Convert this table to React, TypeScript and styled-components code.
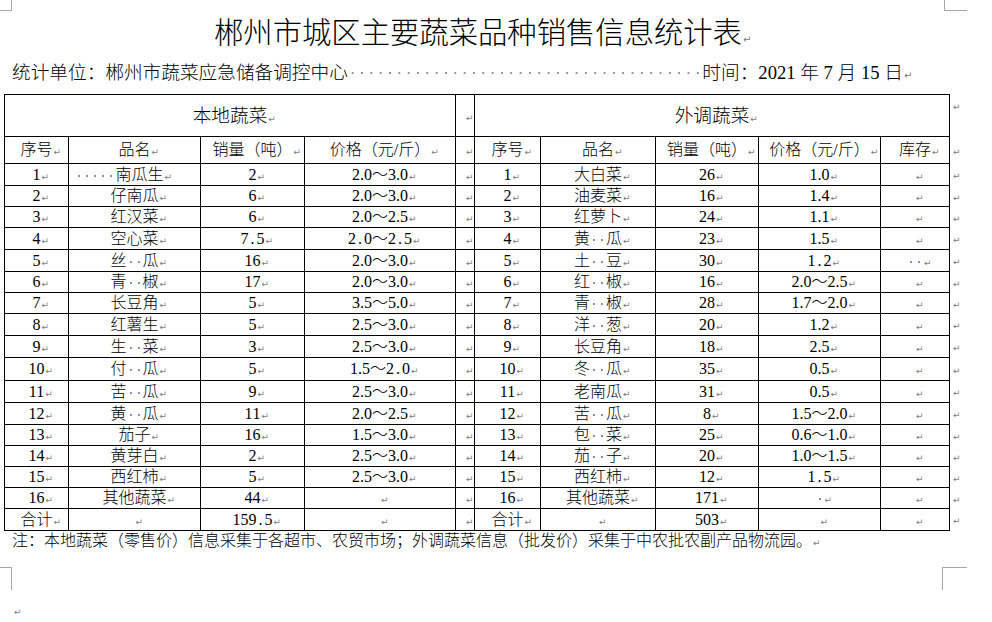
import React from "react";
import styled, { createGlobalStyle } from "styled-components";

const GlobalStyle = createGlobalStyle`
  html, body {
    margin: 0;
    padding: 0;
    background: #fff;
  }
  body {
    font-family: "Liberation Serif", "Noto Sans CJK SC", sans-serif;
    font-weight: 300;
    color: #000;
    overflow: hidden;
  }
`;

const Page = styled.div`
  width: 992px;
  height: 622px;
`;

const CropRow = styled.div<{ $h: number; $top?: number }>`
  display: flex;
  justify-content: space-between;
  height: ${(p) => p.$h}px;
  margin-top: ${(p) => p.$top ?? 0}px;
`;

const Crop = styled.div<{ $side: "left" | "right"; $edge: "top" | "bottom"; $w: number }>`
  box-sizing: border-box;
  width: ${(p) => p.$w}px;
  height: 100%;
  border: 0 solid #a6a6a6;
  ${(p) => (p.$side === "left" ? "border-right-width: 1px;" : "border-left-width: 1px; margin-right: 25px;")}
  ${(p) => (p.$edge === "top" ? "border-bottom-width: 1px;" : "border-top-width: 1px;")}
`;

const Title = styled.h1`
  margin: 0;
  padding: 0 48px 0 12px;
  font-size: 29.33px;
  font-weight: 300;
  line-height: 44px;
  text-align: center;
`;

const InfoLine = styled.div`
  display: flex;
  align-items: center;
  margin-top: 2px;
  padding-left: 12px;
  font-size: 18.67px;
  line-height: 32px;
  white-space: nowrap;
`;

const Mark = styled.span<{ $size?: number }>`
  display: inline-block;
  width: 0;
  white-space: nowrap;
  text-indent: 1px;
  font-family: "DejaVu Sans", sans-serif;
  font-weight: 400;
  font-size: ${(p) => p.$size ?? 9}px;
  line-height: 1;
  color: #7c7c7c;
`;

const Dots = styled.span<{ $n: number; $gap: number }>`
  display: inline-block;
  width: ${(p) => p.$n * p.$gap}px;
  height: 12px;
  vertical-align: middle;
  background-image: radial-gradient(circle, #8496ad 0 0.9px, transparent 1.3px);
  background-size: ${(p) => p.$gap}px 100%;
  background-repeat: repeat-x;
`;

/* half-width cell of the old Song-style digits: every ASCII glyph takes 8px */
const HalfChar = styled.span`
  display: inline-block;
  width: 8px;
  text-align: center;
`;

const Sheet = styled.table`
  border-collapse: collapse;
  table-layout: fixed;
  margin: 5px 0 0 4px;
`;

const Row = styled.tr<{ $h: number }>`
  height: ${(p) => p.$h}px;
`;

const Cell = styled.td<{ $size?: number; $pr?: number }>`
  border: 1px solid #000;
  padding: 0 ${(p) => p.$pr ?? 0}px 0 0;
  text-align: center;
  vertical-align: middle;
  font-size: ${(p) => p.$size ?? 16}px;
  line-height: 16px;
  white-space: nowrap;
`;

const EndCell = styled.td<{ $top?: boolean }>`
  border: none;
  padding: ${(p) => (p.$top ? "4px" : "0")} 0 0 2px;
  text-align: left;
  vertical-align: ${(p) => (p.$top ? "top" : "middle")};
  line-height: 12px;
`;

const Note = styled.p`
  margin: 0;
  padding-left: 12px;
  font-size: 16px;
  line-height: 20px;
  white-space: nowrap;
`;

const LastLine = styled.div`
  margin-top: 14px;
  padding-left: 13px;
  line-height: 12px;
`;

const colWidths = [64, 132, 104, 151, 19, 66, 115, 103, 122, 69, 30];

const leftRows: string[][] = [
  ["1", "·····南瓜生", "{2}", "2.0～3.0"],
  ["2", "仔南瓜", "{6}", "2.0～3.0"],
  ["3", "红汉菜", "{6}", "2.0～2.5"],
  ["4", "空心菜", "{7.5}", "{2.0～2.5}"],
  ["5", "丝··瓜", "{16}", "2.0～3.0"],
  ["6", "青··椒", "{17}", "2.0～3.0"],
  ["7", "长豆角", "{5}", "3.5～5.0"],
  ["8", "红薯生", "{5}", "2.5～3.0"],
  ["9", "生··菜", "{3}", "2.5～3.0"],
  ["10", "付··瓜", "{5}", "1.5～{2.0}"],
  ["11", "苦··瓜", "{9}", "2.5～3.0"],
  ["12", "黄··瓜", "{11}", "2.0～2.5"],
  ["13", "茄子", "{16}", "1.5～3.0"],
  ["14", "黄芽白", "2", "2.5～3.0"],
  ["15", "西红柿", "5", "2.5～3.0"],
  ["16", "其他蔬菜", "{44}", ""],
  ["合计", "", "{159.5}", ""],
];

const rightRows: string[][] = [
  ["1", "大白菜", "26", "1.0", ""],
  ["2", "油麦菜", "16", "1.4", ""],
  ["3", "红萝卜", "24", "1.1", ""],
  ["4", "黄··瓜", "23", "1.5", ""],
  ["5", "土··豆", "30", "{1.2}", "··"],
  ["6", "红··椒", "16", "2.0～2.5", ""],
  ["7", "青··椒", "28", "1.7～2.0", ""],
  ["8", "洋··葱", "20", "1.2", ""],
  ["9", "长豆角", "18", "2.5", ""],
  ["10", "冬··瓜", "35", "0.5", ""],
  ["11", "老南瓜", "31", "0.5", ""],
  ["12", "苦··瓜", "8", "1.5～2.0", ""],
  ["13", "包··菜", "25", "0.6～1.0", ""],
  ["14", "茄··子", "20", "1.0～1.5", ""],
  ["15", "西红柿", "12", "{1.5}", ""],
  ["16", "其他蔬菜", "171", "·", ""],
  ["合计", "", "503", "", ""],
];

const rowHeights = [22, 21, 21, 22, 22, 21, 21, 22, 22, 23, 22, 22, 21, 21, 21, 21, 22];

const Song = ({ t }: { t: string }) => (
  <>
    {t.split("").map((c, i) =>
      c.charCodeAt(0) < 128 ? <HalfChar key={i}>{c}</HalfChar> : <React.Fragment key={i}>{c}</React.Fragment>
    )}
  </>
);

const Rich = ({ v }: { v: string }) => {
  const parts = v.split(/(\{[^}]*\}|·+)/).filter(Boolean);
  return (
    <>
      {parts.map((p, i) =>
        p.startsWith("{") ? (
          <Song key={i} t={p.slice(1, -1)} />
        ) : p[0] === "·" ? (
          <Dots key={i} $n={p.length} $gap={8} />
        ) : (
          <React.Fragment key={i}>{p}</React.Fragment>
        )
      )}
      <Mark>↵</Mark>
    </>
  );
};

const subHeads = ["序号", "品名", "销量（吨）", "价格（元/斤）"];

export default function App() {
  return (
    <Page>
      <GlobalStyle />
      <CropRow $h={11}>
        <Crop $side="left" $edge="top" $w={12} />
        <Crop $side="right" $edge="top" $w={23} />
      </CropRow>

      <Title>
        郴州市城区主要蔬菜品种销售信息统计表<Mark $size={10}>↵</Mark>
      </Title>

      <InfoLine>
        <span>统计单位：郴州市蔬菜应急储备调控中心</span>
        <Dots $n={38} $gap={9.33} />
        <span>
          时间：2021 年 7 月 15 日<Mark $size={10}>↵</Mark>
        </span>
      </InfoLine>

      <Sheet>
        <colgroup>
          {colWidths.map((w, i) => (
            <col key={i} style={{ width: w }} />
          ))}
        </colgroup>
        <tbody>
          <Row $h={42}>
            <Cell colSpan={4} $size={18.67}>
              本地蔬菜<Mark>↵</Mark>
            </Cell>
            <Cell>
              <Mark>↵</Mark>
            </Cell>
            <Cell colSpan={5} $size={18.67}>
              外调蔬菜<Mark>↵</Mark>
            </Cell>
            <EndCell $top>
              <Mark>↵</Mark>
            </EndCell>
          </Row>
          <Row $h={27}>
            {subHeads.map((h) => (
              <Cell key={"l" + h}>
                <Rich v={h} />
              </Cell>
            ))}
            <Cell>
              <Mark>↵</Mark>
            </Cell>
            {[...subHeads, "库存"].map((h) => (
              <Cell key={"r" + h}>
                <Rich v={h} />
              </Cell>
            ))}
            <EndCell>
              <Mark>↵</Mark>
            </EndCell>
          </Row>
          {leftRows.map((l, i) => (
            <Row key={i} $h={rowHeights[i]}>
              {l.map((v, j) => (
                <Cell key={j} $pr={i === 0 && j === 1 ? 30 : 0}>
                  <Rich v={v} />
                </Cell>
              ))}
              <Cell>
                <Mark>↵</Mark>
              </Cell>
              {rightRows[i].map((v, j) => (
                <Cell key={j}>
                  <Rich v={v} />
                </Cell>
              ))}
              <EndCell>
                <Mark>↵</Mark>
              </EndCell>
            </Row>
          ))}
        </tbody>
      </Sheet>

      <Note>
        注：本地蔬菜（零售价）信息采集于各超市、农贸市场；外调蔬菜信息（批发价）采集于中农批农副产品物流园。
        <Mark>↵</Mark>
      </Note>

      <CropRow $h={23} $top={16}>
        <Crop $side="left" $edge="bottom" $w={12} />
        <Crop $side="right" $edge="bottom" $w={25} />
      </CropRow>

      <LastLine>
        <Mark>↵</Mark>
      </LastLine>
    </Page>
  );
}
